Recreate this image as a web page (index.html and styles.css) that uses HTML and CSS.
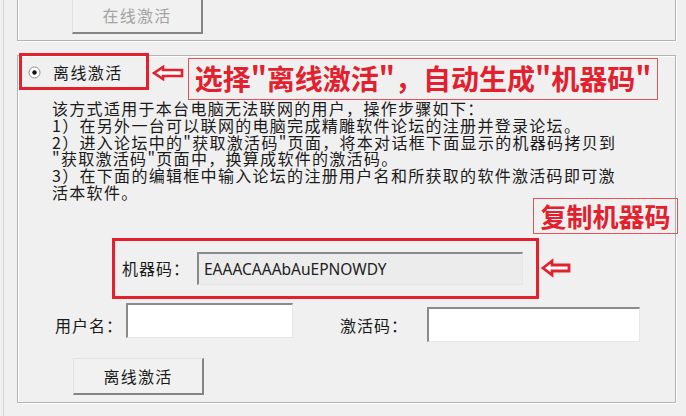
FILE: index.html
```html
<!DOCTYPE html>
<html lang="zh-CN">
<head>
    <meta charset="UTF-8">
    <title>离线激活</title>
    <link rel="stylesheet" href="styles.css">
</head>
<body>
    <div class="dialog">
        <div class="group groupOnline">
            <button class="winButton" disabled>在线激活</button>
        </div>

        <div class="group groupOffline">
            <label class="radioRow">
                <svg class="radio" width="13" height="13" viewBox="0 0 13 13">
                    <circle cx="6.5" cy="6.5" r="5.5" fill="#fff" stroke="#8c8c8c" stroke-width="1"/>
                    <circle cx="6.5" cy="6.5" r="2.2" fill="#111"/>
                </svg>
                <span>离线激活</span>
            </label>

            <div class="helpText">
                <div>该方式适用于本台电脑无法联网的用户，操作步骤如下：</div>
                <div>1）在另外一台可以联网的电脑完成精雕软件论坛的注册并登录论坛。</div>
                <div>2）进入论坛中的"获取激活码"页面，将本对话框下面显示的机器码拷贝到</div>
                <div>"获取激活码"页面中，换算成软件的激活码。</div>
                <div>3）在下面的编辑框中输入论坛的注册用户名和所获取的软件激活码即可激</div>
                <div>活本软件。</div>
            </div>

            <div class="codeRow">
                <span class="fieldLabel codeLabel">机器码：</span>
                <div class="editBox readOnly">EAAACAAAbAuEPNOWDY</div>
            </div>

            <div class="userRow">
                <span class="fieldLabel userLabel">用户名：</span>
                <div class="editBox userBox"></div>
                <span class="fieldLabel keyLabel">激活码：</span>
                <div class="editBox keyBox"></div>
            </div>

            <div class="buttonRow">
                <button class="winButton">离线激活</button>
            </div>
        </div>

        <!-- annotations drawn over the dialog -->
        <div class="markBox markRadio"></div>
        <svg class="arrow arrowRadio" width="32" height="16" viewBox="0 0 32 16">
            <polygon points="2,8 11,2 11,5 30,5 30,11 11,11 11,14" fill="#fff" stroke="#e3202d" stroke-width="2.6" stroke-linejoin="miter"/>
        </svg>
        <div class="note noteTop">选择"离线激活"，自动生成"机器码"</div>

        <div class="note noteCopy">复制机器码</div>
        <div class="markBox markCode"></div>
        <svg class="arrow arrowCode" width="30" height="20" viewBox="0 0 30 20">
            <polygon points="2,10 11,3 11,7 28,7 28,13 11,13 11,17" fill="#fff" stroke="#e3202d" stroke-width="2.8" stroke-linejoin="miter"/>
        </svg>
    </div>
</body>
</html>
```

FILE: styles.css
```css
body {
    margin: 0;
    background: #f0f0f0;
    font-family: "Noto Sans CJK SC", "Noto Sans", sans-serif;
    color: #1a1a1a;
    overflow: hidden;
}

.dialog {
    position: relative;
    display: flex;
    flex-direction: column;
    width: 669px;
    height: 416px;
    margin-left: 3px;
    padding-left: 13px;
    border-left: 1px solid #d4d4d4;
}

.group {
    box-sizing: border-box;
    width: 659px;
    border: 1px solid #b4b4b4;
    box-shadow: 1px 1px 0 #fff, inset 1px 1px 0 #fff;
}

.groupOnline {
    margin-top: -20px;
    padding: 16px 0 6px 54px;
}

.groupOffline {
    margin-top: 14px;
    padding: 6px 0 7px 0;
}

.winButton {
    width: 131px;
    height: 37px;
    padding: 0;
    font-family: "Noto Sans CJK SC", sans-serif;
    font-size: 16px;
    letter-spacing: 1.3px;
    color: #1a1a1a;
    background: #f1f1f1;
    border-top: 1px solid #e2e2e2;
    border-left: 1px solid #e2e2e2;
    border-right: 2px solid #858585;
    border-bottom: 2px solid #858585;
}

.winButton:disabled {
    color: #a3a3a3;
}

.radioRow {
    display: flex;
    align-items: center;
    height: 20px;
    margin-left: 10px;
    font-size: 16px;
    letter-spacing: 1.4px;
}

.radio {
    margin-right: 12px;
}

.helpText {
    margin: 18px 0 0 34px;
    font-size: 16px;
    letter-spacing: 1.3px;
    line-height: 16.8px;
    white-space: nowrap;
}

.fieldLabel {
    font-size: 16px;
    letter-spacing: 1px;
    line-height: 17px;
    white-space: nowrap;
}

.editBox {
    box-sizing: border-box;
    background: #fff;
    border-top: 2px solid #8a8a8a;
    border-left: 2px solid #8a8a8a;
    border-right: 1px solid #e6e6e6;
    border-bottom: 1px solid #e6e6e6;
}

.codeRow {
    display: flex;
    align-items: center;
    margin: 51px 0 0 104px;
}

.codeLabel {
    width: 75px;
}

.readOnly {
    width: 326px;
    height: 33px;
    padding: 3px 0 0 5px;
    background: #ececec;
    font-family: "Noto Sans", sans-serif;
    font-size: 15.5px;
    line-height: 24px;
    color: #222;
}

.userRow {
    display: flex;
    align-items: flex-start;
    margin: 18px 0 0 37px;
}

.userLabel {
    width: 71px;
    margin-top: 14px;
}

.userBox {
    width: 167px;
    height: 35px;
}

.keyLabel {
    width: 87px;
    margin: 14px 0 0 47px;
}

.keyBox {
    width: 213px;
    height: 35px;
    margin-top: 4px;
}

.buttonRow {
    margin: 16px 0 0 55px;
}

/* annotations */
.markBox {
    position: absolute;
    box-sizing: border-box;
    border: 3px solid #e3202d;
}

.markRadio {
    left: 15px;
    top: 53px;
    width: 130px;
    height: 37px;
}

.markCode {
    left: 108px;
    top: 238px;
    width: 427px;
    height: 61px;
}

.arrow {
    position: absolute;
}

.arrowRadio {
    left: 148px;
    top: 65px;
}

.arrowCode {
    left: 537px;
    top: 258px;
}

.note {
    position: absolute;
    box-sizing: border-box;
    border: 1.5px solid #e8505a;
    color: #e3202d;
    font-weight: bold;
    text-align: center;
    white-space: nowrap;
}

.noteTop {
    left: 184px;
    top: 58px;
    width: 470px;
    height: 42px;
    font-size: 28px;
    line-height: 38px;
}

.noteCopy {
    left: 529px;
    top: 198px;
    width: 145px;
    height: 36px;
    font-size: 26px;
    line-height: 33px;
}
```
